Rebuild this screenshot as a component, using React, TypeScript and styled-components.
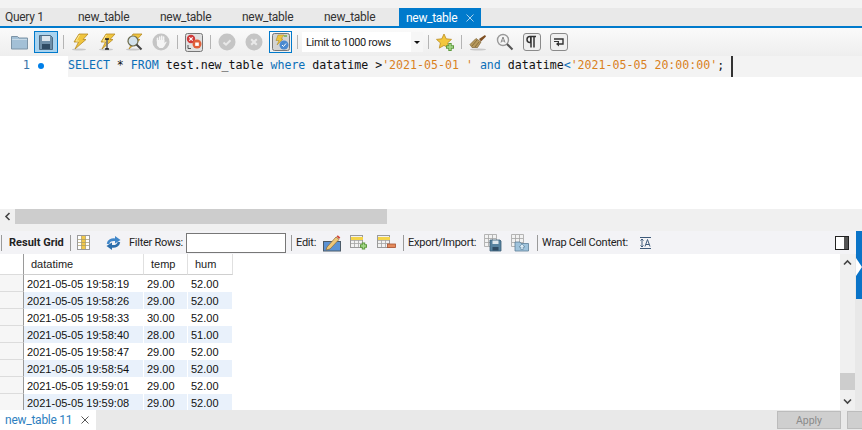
import { Fragment } from "react";
import type { ReactNode } from "react";
import { createGlobalStyle, styled } from "styled-components";

const UI_FONT = `Roboto, "Liberation Sans", sans-serif`;

const Global = createGlobalStyle`
  html, body { margin: 0; padding: 0; background: #f0f0f0; }
  body { font-family: "Liberation Sans", Arial, sans-serif; font-size: 11px; color: #1e1e1e; }
`;

const Page = styled.div`
  position: relative;
  width: 862px;
  height: 430px;
  display: flex;
  flex-direction: column;
  overflow: hidden;
  background: #f0f0f0;
`;

/* query tabs */
const TabBar = styled.div`
  height: 28px;
  box-sizing: border-box;
  padding: 8px 0 0 5px;
  background: linear-gradient(#f3f3f3 0 8px, #e9e9e9 8px);
  border-bottom: 2px solid #007acc;
  display: flex;
  flex: none;
`;

const Tab = styled.div<{ $active?: boolean; $w: number }>`
  width: ${(p) => p.$w}px;
  height: ${(p) => (p.$active ? 20 : 18)}px;
  box-sizing: border-box;
  display: flex;
  align-items: center;
  justify-content: space-between;
  padding: ${(p) => (p.$active ? "0 7px" : "0")};
  font-family: ${UI_FONT};
  font-size: 12px;
  letter-spacing: -0.3px;
  color: ${(p) => (p.$active ? "#fff" : "#333")};
  background: ${(p) => (p.$active ? "#007acc" : "transparent")};
`;

const Close = styled.span`
  width: 8px;
  height: 8px;
  flex: none;
  display: block;
  line-height: 0;
`;

const X = ({ color }: { color: string }) => (
  <Close>
    <svg width="8" height="8" viewBox="0 0 8 8">
      <path d="M.5.5l7 7M7.5.5l-7 7" stroke={color} strokeWidth="1" fill="none" />
    </svg>
  </Close>
);

/* toolbars */
const Toolbar = styled.div`
  height: 28px;
  flex: none;
  display: flex;
  align-items: center;
  padding-left: 5px;
  background: linear-gradient(#fafafa, #eeeeee);
`;

const IconSlot = styled.div<{ $w?: number; $ml?: number; $selected?: boolean; $outlined?: boolean }>`
  width: ${(p) => p.$w ?? 27}px;
  height: 22px;
  margin-left: ${(p) => p.$ml ?? 0}px;
  flex: none;
  display: flex;
  align-items: center;
  justify-content: center;
  box-sizing: border-box;
  ${(p) => p.$selected && "background: #a9d3ef; border: 1px solid #007acc;"}
  ${(p) => p.$outlined && "border: 1px solid #007acc;"}
`;

const Sep = styled.div<{ $ml?: number; $mr?: number; $color?: string; $h?: number }>`
  width: 1px;
  height: ${(p) => p.$h ?? 14}px;
  flex: none;
  margin-left: ${(p) => p.$ml ?? 0}px;
  margin-right: ${(p) => p.$mr ?? 0}px;
  background: ${(p) => p.$color ?? "#b4b4b4"};
`;

const LimitSelect = styled.div`
  width: 121px;
  height: 20px;
  flex: none;
  box-sizing: border-box;
  padding-left: 4px;
  display: flex;
  align-items: center;
  justify-content: space-between;
  background: #fff;
  font-family: ${UI_FONT};
  font-size: 11px;
  letter-spacing: -0.35px;
  color: #222;
`;

const Caret = styled.div`
  width: 12px;
  height: 20px;
  background: #f6f6f6;
  display: flex;
  align-items: center;
  justify-content: center;
  &::before {
    content: "";
    border-left: 3px solid transparent;
    border-right: 3px solid transparent;
    border-top: 3px solid #111;
  }
`;

/* icons */
const Svg = ({ children, w = 18, h = 18 }: { children: ReactNode; w?: number; h?: number }) => (
  <svg width={w} height={h} viewBox={`0 0 ${w} ${h}`}>
    {children}
  </svg>
);

const Folder = () => (
  <Svg w={17} h={16}>
    <path d="M.5 2.5h6l1.500 1.500h8.500v11H.5z" fill="#a3c0d6" stroke="#7d94a6" />
    <path d="M1 5.500h15" stroke="#c6d9e6" />
  </Svg>
);

const Floppy = () => (
  <Svg w={14} h={15}>
    <path d="M.5.5h11l2 2v12H.5z" fill="#6f8fa8" stroke="#4d6a82" />
    <rect x="3" y="1" width="8" height="5" fill="#dfe7ed" />
    <rect x="3" y="9" width="8" height="5" fill="#2f4b63" />
  </Svg>
);

const Bolt = () => (
  <>
    <ellipse cx="8" cy="16.500" rx="7" ry="1" fill="#c9c9c9" />
    <path d="M8 1h9l-5 5.500h3L4 16l3.500-7H3z" fill="#f0c53e" stroke="#b68a24" strokeWidth=".8" />
    <path d="M8.500 2L5 8h3" stroke="#fbe89a" fill="none" />
  </>
);

const Lightning = () => (
  <Svg>
    <Bolt />
  </Svg>
);

const LightningCursor = () => (
  <Svg>
    <Bolt />
    <path d="M7 6h4M7 16h4M9 6v10" stroke="#222" strokeWidth="1.600" fill="none" />
    <path d="M9 7v8" stroke="#eee" strokeWidth=".7" />
  </Svg>
);

const LightningLens = () => (
  <Svg>
    <Bolt />
    <circle cx="8" cy="8" r="5" fill="#d3e2ec" stroke="#6c6c50" strokeWidth="1.200" />
    <path d="M11.500 11.500l5 5" stroke="#444" strokeWidth="2" />
  </Svg>
);

const Hand = () => (
  <Svg>
    <circle cx="9" cy="9" r="8.500" fill="#c5c5c5" />
    <path d="M5.500 8V5.200M7.700 7V4M9.700 7V3.300M11.600 7V4" stroke="#f5f5f5" strokeWidth="1.500" fill="none" strokeLinecap="round" />
    <path d="M4.800 7h7.700v3l1.500-1.500.7.500-2.500 4.500-1.500 1.500H7.500L5 12.500z" fill="#f5f5f5" />
  </Svg>
);

const StopErr = () => (
  <Svg w={18} h={19}>
    <rect x=".5" y=".5" width="17" height="18" rx="2" fill="#e0e0e0" stroke="#777" />
    <circle cx="6" cy="6" r="4.200" fill="#d03a3a" />
    <path d="M4.300 4.300l3.400 3.400M7.700 4.300l-3.400 3.400" stroke="#fff" strokeWidth="1.200" />
    <circle cx="12" cy="11" r="4.500" fill="#e0603a" />
    <rect x="10.200" y="9.500" width="3.600" height="3.400" fill="#fff" />
    <path d="M3 12v3.500h3" stroke="#555" fill="none" />
  </Svg>
);

const CircleCheck = () => (
  <Svg>
    <circle cx="9" cy="9" r="8.500" fill="#c5c5c5" />
    <path d="M5.500 9.500l2.500 2.200 4.500-4.500" stroke="#e9e9e9" strokeWidth="2" fill="none" />
  </Svg>
);

const CircleCross = () => (
  <Svg>
    <circle cx="9" cy="9" r="8.500" fill="#c5c5c5" />
    <path d="M6.200 6.200l5.600 5.600M11.800 6.200l-5.600 5.600" stroke="#e9e9e9" strokeWidth="2" fill="none" />
  </Svg>
);

const AutoCommit = () => (
  <Svg>
    <rect x=".5" y=".5" width="17" height="17" rx="2" fill="#d4d4d4" stroke="#777" />
    <path d="M6 2h6L9 6h2l-6 6 2-4.500H4z" fill="#eec43c" stroke="#a98422" strokeWidth=".5" />
    <path d="M12 3l3 0" stroke="#6fb04a" strokeWidth="1.500" />
    <circle cx="12" cy="12" r="4.500" fill="#4a8ad0" />
    <path d="M10 12l1.500 1.500L14 10.500" stroke="#fff" fill="none" />
  </Svg>
);

const StarPlus = () => (
  <Svg w={19} h={18}>
    <path d="M8 1l2.200 4.800 5.300.6-3.900 3.500 1.100 5.200L8 12.400 3.300 15.100l1.100-5.200L.5 6.400l5.300-.6z" fill="#f3c73d" stroke="#b98c22" strokeWidth=".8" />
    <path d="M14 10v8M10 14h8" stroke="#5d9a3c" strokeWidth="3.400" />
    <path d="M14 11v6M11 14h6" stroke="#a5d98a" strokeWidth="1.600" />
  </Svg>
);

const Broom = () => (
  <Svg>
    <ellipse cx="9" cy="16.500" rx="8" ry="1" fill="#c9c9c9" />
    <path d="M1 11.500l6-6 5 3.500-3.500 5.500H3z" fill="#b79a5c" stroke="#7c6232" strokeWidth=".7" />
    <path d="M3 13l5-6M6 14l4-5" stroke="#7c6232" strokeWidth=".8" />
    <path d="M10 6l6-4 1 1.500-5 5z" fill="#7f4f22" />
  </Svg>
);

const LensA = () => (
  <Svg>
    <circle cx="7" cy="7" r="5.500" fill="#f6f6f6" stroke="#9a9a9a" strokeWidth="1.400" />
    <path d="M11 11l5.500 5.500" stroke="#555" strokeWidth="2" />
    <path d="M5 9.500L7 4l2 5.500M5.800 8h2.400" stroke="#888" fill="none" />
  </Svg>
);

const Pilcrow = () => (
  <Svg>
    <rect x=".5" y=".5" width="17" height="17" rx="2.500" fill="#f0f0f0" stroke="#8a8a8a" />
    <path d="M8 3.500H7a3 3 0 000 6h1zM8 3.500v11M11 3.500v11M8 3.500h5" stroke="#333" strokeWidth="1.500" fill="none" />
    <path d="M7 4h1v5H7z" fill="#333" />
  </Svg>
);

const WrapIcon = () => (
  <Svg>
    <rect x=".5" y=".5" width="17" height="17" rx="2.500" fill="#f0f0f0" stroke="#8a8a8a" />
    <path d="M4 6h9v5H7" stroke="#333" strokeWidth="1.400" fill="none" />
    <path d="M9 8.500L6 11l3 2.500z" fill="#333" />
    <path d="M4 8.500h5" stroke="#333" />
  </Svg>
);

const GridCols = () => (
  <Svg w={13} h={15}>
    <rect x=".5" y=".5" width="12" height="14" fill="#fff" stroke="#9a9a9a" />
    <rect x="4.500" y="1" width="4" height="13" fill="#f2c94a" />
    <path d="M4.500 1v13M8.500 1v13M1 4.500h11M1 7.500h11M1 10.500h11" stroke="#a69a6a" strokeWidth=".7" />
  </Svg>
);

const Refresh = () => (
  <Svg w={17} h={14}>
    <path d="M3 8C3.500 5 6.500 3 10.500 3.800" fill="none" stroke="#3f86c9" strokeWidth="2.600" />
    <path d="M10 0l5.500 4-5.500 3.500z" fill="#3f86c9" />
    <path d="M14 6C13.500 9 10.500 11 6.500 10.200" fill="none" stroke="#2d6eab" strokeWidth="2.600" />
    <path d="M7 14L1.500 10 7 6.500z" fill="#2d6eab" />
  </Svg>
);

const EditIcon = () => (
  <Svg w={19} h={18}>
    <rect x=".5" y="7.500" width="17" height="9.500" fill="#5d93d4" stroke="#4b5a68" />
    <path d="M4 13L13 3l3 2.500L7 15l-4 1z" fill="#f0c878" stroke="#8a6a3a" strokeWidth=".7" />
    <path d="M13.500 2.500l1.300-1.300 2.500 2.300-1.300 1.500z" fill="#d24a3a" />
  </Svg>
);

const TableIcon = ({ children }: { children?: ReactNode }) => (
  <Svg w={19} h={15}>
    <rect x=".5" y=".5" width="12" height="12" fill="#f2f2f2" stroke="#9a9a9a" />
    <rect x="1" y="2" width="12" height="3" fill="#f4d44a" />
    <path d="M4.500 5v7M8.500 5v7M1 5.500h11M1 8.500h11" stroke="#a3a3a3" strokeWidth=".8" />
    {children}
  </Svg>
);

const TablePlus = () => (
  <TableIcon>
    <path d="M13.500 7.500v7M10 11h7" stroke="#5d9a3c" strokeWidth="3.400" />
    <path d="M13.500 8.500v5M11 11h5" stroke="#a5d98a" strokeWidth="1.500" />
  </TableIcon>
);

const TableMinus = () => (
  <TableIcon>
    <rect x="10.500" y="9" width="8" height="3.500" fill="#e58a5c" stroke="#a6502e" strokeWidth=".8" />
  </TableIcon>
);

const ExportIcon = () => (
  <Svg>
    <path d="M.5.500h12v12H.5zM4.500 1v11M8.500 1v11M1 4.500h11M1 8.500h11" fill="#f2f2f2" stroke="#a3a3a3" strokeWidth=".8" />
    <path d="M6 6h10l1 1v10H6z" fill="#57829f" stroke="#3b5e77" strokeWidth=".8" />
    <rect x="8.500" y="6.500" width="6" height="3.500" fill="#dfe7ed" />
    <rect x="8.500" y="13" width="6" height="3.500" fill="#2f4b63" />
  </Svg>
);

const ImportIcon = () => (
  <Svg>
    <path d="M.5.500h12v12H.5zM4.500 1v11M8.500 1v11M1 4.500h11M1 8.500h11" fill="#f2f2f2" stroke="#a3a3a3" strokeWidth=".8" />
    <path d="M4 8h5l1 1.500h7.500V17H4z" fill="#9fc3dc" stroke="#5d7f98" strokeWidth=".8" />
    <path d="M11 10l3 3h-1.800v2.500h-2.400V13H8z" fill="#dcecf6" stroke="#5d7f98" strokeWidth=".6" />
  </Svg>
);

const WrapCellIcon = () => (
  <Svg w={13} h={14}>
    <path d="M1 1.500h11M1 12.500h11" stroke="#3e5a7a" />
    <path d="M3 3v8M1.500 4.500L3 3l1.500 1.500M1.500 9.500L3 11l1.500-1.500" stroke="#3e5a7a" fill="none" />
    <path d="M6 10.500L8.500 3.500 11 10.500M7 8.500h3.200" stroke="#3e5a7a" fill="none" />
  </Svg>
);

const PanelToggle = () => (
  <Svg w={14} h={14}>
    <rect x=".5" y=".5" width="13" height="13" fill="#fff" stroke="#222" />
    <rect x="9" y="1" width="4" height="12" fill="#555" />
  </Svg>
);

/* editor */
const Editor = styled.div`
  height: 153px;
  flex: none;
  display: grid;
  grid-template-columns: 68px 1fr;
  background: #fff;
`;

const Gutter = styled.div`
  display: flex;
  align-items: flex-start;
  height: 21px;
  box-sizing: border-box;
  padding-top: 2px;
  font-family: "DejaVu Sans Mono", monospace;
  font-size: 12px;
  line-height: 15px;
  color: #3a74a8;
`;

const LineNumber = styled.span`
  width: 30px;
  text-align: right;
`;

const Dot = styled.span`
  width: 6px;
  height: 6px;
  margin: 5px 0 0 8px;
  border-radius: 50%;
  background: #007fe8;
`;

const Code = styled.div`
  height: 21px;
  box-sizing: border-box;
  padding-top: 2px;
  background: #f3f3f3;
  font-family: "DejaVu Sans Mono", monospace;
  font-size: 11.6px;
  line-height: 15px;
  white-space: pre;
  color: #111;
`;

const Tok = styled.span<{ $k?: "kw" | "str" }>`
  color: ${(p) => (p.$k === "kw" ? "#0b6fb8" : p.$k === "str" ? "#d9811e" : "inherit")};
`;

const TextCursor = styled.span`
  display: inline-block;
  width: 2px;
  height: 21px;
  margin: -2px 0 0 7px;
  vertical-align: top;
  background: #333;
`;

/* horizontal scrollbar */
const HScroll = styled.div`
  height: 15px;
  flex: none;
  display: flex;
  background: #f0f0f0;
`;

const HArrow = styled.div`
  width: 15px;
  display: flex;
  align-items: center;
  justify-content: center;
`;

const HThumb = styled.div`
  width: 372px;
  background: #cdcdcd;
`;

const Gap = styled.div`
  height: 7px;
  flex: none;
  background: #f0f0f0;
`;

/* result area */
const ResultBar = styled.div`
  height: 23px;
  flex: none;
  display: flex;
  align-items: center;
  padding: 0 13px 0 1px;
  background: #f3f3f6;
  font-family: ${UI_FONT};
  font-size: 11px;
  color: #222;
`;

const BarLabel = styled.span<{ $bold?: boolean; $ml: number; $w: number }>`
  width: ${(p) => p.$w}px;
  flex: none;
  margin-left: ${(p) => p.$ml}px;
  font-weight: ${(p) => (p.$bold ? 700 : 400)};
  letter-spacing: ${(p) => (p.$bold ? 0 : -0.25)}px;
  white-space: nowrap;
`;

const FilterInput = styled.div`
  width: 100px;
  height: 20px;
  flex: none;
  margin-left: 5px;
  box-sizing: border-box;
  background: #fff;
  border: 1px solid #777;
`;

const Spacer = styled.div`
  flex: 1;
`;

const ResultBody = styled.div`
  height: 156px;
  flex: none;
  display: flex;
  background: #fff;
  overflow: hidden;
`;

const GridArea = styled.div`
  width: 840px;
  flex: none;
`;

const Table = styled.div`
  display: grid;
  grid-template-columns: 24px 120px 44px 45px;
  width: 233px;
`;

const HeaderCell = styled.div`
  height: 21px;
  box-sizing: border-box;
  padding-left: 7px;
  display: flex;
  align-items: center;
  font-size: 11px;
  color: #222;
  border-right: 1px solid #e0e0e0;
  border-bottom: 1px solid #cfcfcf;
`;

const RowHead = styled.div<{ $first?: boolean }>`
  height: ${(p) => (p.$first ? 21 : 17)}px;
  box-sizing: border-box;
  background: ${(p) => (p.$first ? "#fff" : "#f6f6f6")};
  border-bottom: 1px solid #dcdcdc;
  border-right: 1px solid #9a9a9a;
`;

const Cell = styled.div<{ $alt: boolean }>`
  height: 17px;
  box-sizing: border-box;
  padding-left: 3px;
  display: flex;
  align-items: center;
  font-size: 11px;
  color: #111;
  background: ${(p) => (p.$alt ? "#e9f1fb" : "#fff")};
  border-right: 1px solid #fff;
`;

const VScroll = styled.div`
  width: 15px;
  flex: none;
  display: flex;
  flex-direction: column;
  background: #f0f0f0;
`;

const VArrow = styled.div`
  height: 17px;
  flex: none;
  display: flex;
  align-items: center;
  justify-content: center;
`;

const VTrack = styled.div`
  flex: 1;
  display: flex;
  flex-direction: column;
  justify-content: flex-end;
`;

const VThumb = styled.div`
  height: 17px;
  margin-bottom: 3px;
  background: #cdcdcd;
`;

const SideRail = styled.div`
  width: 7px;
  flex: none;
  background: #e8e8e8;
`;

const BlueHandle = styled.div`
  position: absolute;
  left: 856px;
  top: 231px;
  width: 6px;
  height: 68px;
  background: #0a74c8;
  &::after {
    content: "";
    position: absolute;
    left: 0;
    top: 27px;
    border-left: 6px solid #fff;
    border-top: 9px solid transparent;
    border-bottom: 9px solid transparent;
  }
`;

const StatusBar = styled.div`
  height: 20px;
  flex: none;
  display: flex;
  align-items: flex-start;
  background: #e9e9e9;
`;

const ResultTab = styled.div`
  width: 96px;
  height: 20px;
  box-sizing: border-box;
  padding: 0 7px 0 5px;
  display: flex;
  align-items: center;
  justify-content: space-between;
  background: #fff;
  font-family: ${UI_FONT};
  font-size: 12px;
  letter-spacing: -0.25px;
  color: #2f7fc0;
`;

const ApplyButton = styled.div`
  width: 64px;
  height: 18px;
  margin: 1px 6px 0 0;
  box-sizing: border-box;
  display: flex;
  align-items: center;
  justify-content: center;
  background: #cfcfcf;
  border: 1px solid #bcbcbc;
  color: #8a8a8a;
  font-family: ${UI_FONT};
  font-size: 10.5px;
`;

const RevertStub = styled.div`
  width: 15px;
  height: 18px;
  margin-top: 1px;
  box-sizing: border-box;
  background: #cfcfcf;
  border: 1px solid #bcbcbc;
  border-right: 0;
`;

const Chevron = ({ d }: { d: string }) => (
  <svg width="9" height="7" viewBox="0 0 9 7">
    <path d={d} fill="none" stroke="#444" strokeWidth="1.6" />
  </svg>
);

const rows = [
  ["2021-05-05 19:58:19", "29.00", "52.00"],
  ["2021-05-05 19:58:26", "29.00", "52.00"],
  ["2021-05-05 19:58:33", "30.00", "52.00"],
  ["2021-05-05 19:58:40", "28.00", "51.00"],
  ["2021-05-05 19:58:47", "29.00", "52.00"],
  ["2021-05-05 19:58:54", "29.00", "52.00"],
  ["2021-05-05 19:59:01", "29.00", "52.00"],
  ["2021-05-05 19:59:08", "29.00", "52.00"],
];

export default function App() {
  return (
    <Page>
      <Global />
      <TabBar>
        <Tab $w={73}>Query 1</Tab>
        <Tab $w={82}>new_table</Tab>
        <Tab $w={82}>new_table</Tab>
        <Tab $w={82}>new_table</Tab>
        <Tab $w={75}>new_table</Tab>
        <Tab $w={82} $active>
          new_table
          <X color="#a9d3ef" />
        </Tab>
      </TabBar>
      <Toolbar>
        <IconSlot $w={29}><Folder /></IconSlot>
        <IconSlot $w={24} $selected><Floppy /></IconSlot>
        <Sep $ml={5} $mr={2} />
        <IconSlot><Lightning /></IconSlot>
        <IconSlot><LightningCursor /></IconSlot>
        <IconSlot><LightningLens /></IconSlot>
        <IconSlot><Hand /></IconSlot>
        <Sep $ml={3} $mr={2} />
        <IconSlot><StopErr /></IconSlot>
        <Sep $ml={3} $mr={2} />
        <IconSlot><CircleCheck /></IconSlot>
        <IconSlot><CircleCross /></IconSlot>
        <IconSlot $w={23} $ml={2} $outlined><AutoCommit /></IconSlot>
        <Sep $ml={5} $mr={4} />
        <LimitSelect>
          Limit to 1000 rows
          <Caret />
        </LimitSelect>
        <Sep $ml={5} $mr={3} />
        <IconSlot><StarPlus /></IconSlot>
        <Sep $ml={2} $mr={2} />
        <IconSlot><Broom /></IconSlot>
        <IconSlot><LensA /></IconSlot>
        <IconSlot><Pilcrow /></IconSlot>
        <IconSlot><WrapIcon /></IconSlot>
      </Toolbar>
      <Editor>
        <Gutter>
          <LineNumber>1</LineNumber>
          <Dot />
        </Gutter>
        <Code>
          <Tok $k="kw">SELECT</Tok> * <Tok $k="kw">FROM</Tok> test.new_table <Tok $k="kw">where</Tok> datatime &gt;<Tok $k="str">{"'2021-05-01 '"}</Tok> <Tok $k="kw">and</Tok> datatime<Tok $k="kw">&lt;</Tok><Tok $k="str">'2021-05-05 20:00:00'</Tok>;<TextCursor />
        </Code>
      </Editor>
      <HScroll>
        <HArrow>
          <svg width="7" height="9" viewBox="0 0 7 9">
            <path d="M5.5 1L2 4.5 5.5 8" fill="none" stroke="#444" strokeWidth="1.6" />
          </svg>
        </HArrow>
        <HThumb />
      </HScroll>
      <Gap />
      <ResultBar>
        <Sep $color="#9a9a9a" $h={16} />
        <BarLabel $bold $ml={7} $w={54}>Result Grid</BarLabel>
        <Sep $ml={7} $mr={1} $color="#9a9a9a" $h={16} />
        <IconSlot $w={23}><GridCols /></IconSlot>
        <IconSlot $w={17} $ml={10}><Refresh /></IconSlot>
        <BarLabel $ml={7} $w={52}>Filter Rows:</BarLabel>
        <FilterInput />
        <Sep $ml={5} $color="#9a9a9a" $h={16} />
        <BarLabel $ml={4} $w={20}>Edit:</BarLabel>
        <IconSlot $w={19} $ml={7}><EditIcon /></IconSlot>
        <IconSlot $w={19} $ml={8}><TablePlus /></IconSlot>
        <IconSlot $w={19} $ml={8}><TableMinus /></IconSlot>
        <Sep $ml={7} $color="#9a9a9a" $h={16} />
        <BarLabel $ml={4} $w={68}>Export/Import:</BarLabel>
        <IconSlot $w={18} $ml={8}><ExportIcon /></IconSlot>
        <IconSlot $w={18} $ml={9}><ImportIcon /></IconSlot>
        <Sep $ml={8} $color="#9a9a9a" $h={16} />
        <BarLabel $ml={4} $w={87}>Wrap Cell Content:</BarLabel>
        <IconSlot $w={13} $ml={10}><WrapCellIcon /></IconSlot>
        <Spacer />
        <IconSlot $w={14}><PanelToggle /></IconSlot>
      </ResultBar>
      <ResultBody>
        <GridArea>
          <Table>
            <RowHead $first />
            <HeaderCell>datatime</HeaderCell>
            <HeaderCell>temp</HeaderCell>
            <HeaderCell>hum</HeaderCell>
            {rows.map((row, i) => (
              <Fragment key={i}>
                <RowHead />
                {row.map((value, j) => (
                  <Cell key={j} $alt={i % 2 === 1}>{value}</Cell>
                ))}
              </Fragment>
            ))}
          </Table>
        </GridArea>
        <VScroll>
          <VArrow><Chevron d="M1 5.5L4.5 2 8 5.5" /></VArrow>
          <VTrack><VThumb /></VTrack>
          <VArrow><Chevron d="M1 1.5L4.5 5 8 1.5" /></VArrow>
        </VScroll>
        <SideRail />
      </ResultBody>
      <BlueHandle />
      <StatusBar>
        <ResultTab>
          new_table 11
          <X color="#555" />
        </ResultTab>
        <Spacer />
        <ApplyButton>Apply</ApplyButton>
        <RevertStub />
      </StatusBar>
    </Page>
  );
}
